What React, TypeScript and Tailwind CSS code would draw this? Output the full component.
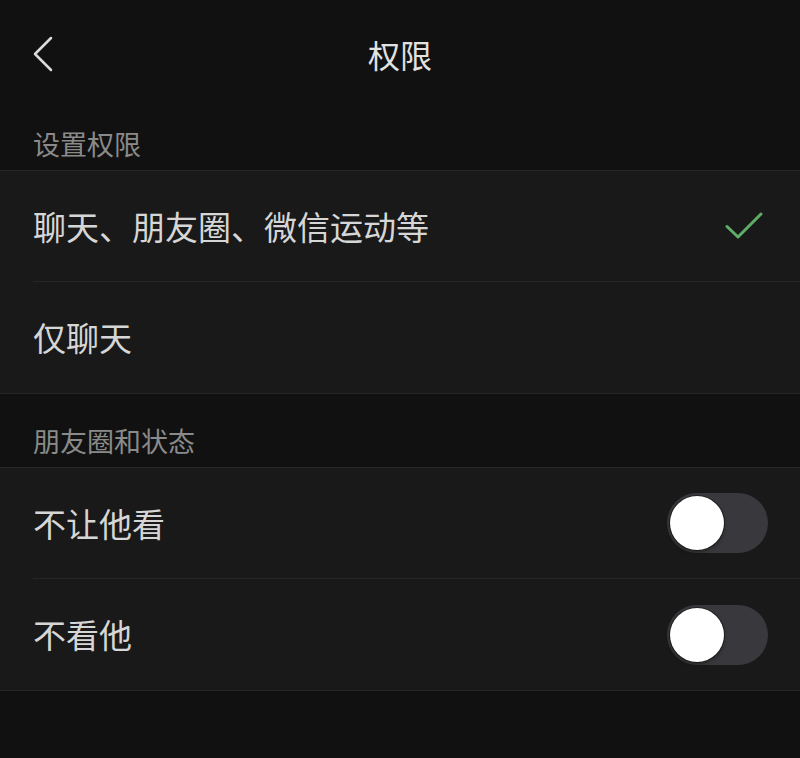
import React from "react";

const font = { fontFamily: '"Noto Sans CJK SC", "Noto Sans", sans-serif' };

function Toggle() {
  return (
    <div className="w-[101px] h-[60px] rounded-full bg-[#39393d] p-[3px] flex items-center">
      <div className="w-[54px] h-[54px] rounded-full bg-white shadow-[0_0_0_1px_rgba(0,0,0,0.35),0_2px_4px_rgba(0,0,0,0.4)]" />
    </div>
  );
}

function Check() {
  return (
    <svg width="38" height="28" viewBox="0 0 38 28" fill="none">
      <path d="M2 14.5 L13 25 L36 2" stroke="#5fae68" strokeWidth="3" strokeLinecap="round" strokeLinejoin="round" />
    </svg>
  );
}

function Row({ label, right, last }: { label: string; right?: React.ReactNode; last?: boolean }) {
  return (
    <div className="pl-[33px]">
      <div className={`flex items-center justify-between h-[111px] pr-[32px] ${last ? "" : "border-b border-[#262626]"}`}>
        <span className="text-[33px] leading-none text-[#d6d6d6]">{label}</span>
        {right}
      </div>
    </div>
  );
}

function SectionHeader({ title, h }: { title: string; h: string }) {
  return (
    <div className={`${h} flex items-end px-[33px] pb-[13px]`}>
      <span className="text-[27px] leading-none text-[#8a8a8a]">{title}</span>
    </div>
  );
}

export default function App() {
  return (
    <div className="w-[800px] h-[758px] bg-[#111111] overflow-hidden" style={font}>
      <div className="h-[108px] flex items-center justify-between px-[33px]">
        <svg width="20" height="36" viewBox="0 0 20 36" fill="none">
          <path d="M18 2 L2 18 L18 34" stroke="#dcdcdc" strokeWidth="2.5" strokeLinecap="round" strokeLinejoin="round" />
        </svg>
        <span className="text-[32px] leading-none text-[#e2e2e2]">权限</span>
        <div className="w-[20px]" />
      </div>

      <SectionHeader title="设置权限" h="h-[62px]" />
      <div className="bg-[#191919] border-y border-[#262626]">
        <Row label="聊天、朋友圈、微信运动等" right={<div className="pr-[5px]"><Check /></div>} />
        <Row label="仅聊天" last />
      </div>

      <SectionHeader title="朋友圈和状态" h="h-[73px]" />
      <div className="bg-[#191919] border-y border-[#262626]">
        <Row label="不让他看" right={<Toggle />} />
        <Row label="不看他" right={<Toggle />} last />
      </div>
    </div>
  );
}
